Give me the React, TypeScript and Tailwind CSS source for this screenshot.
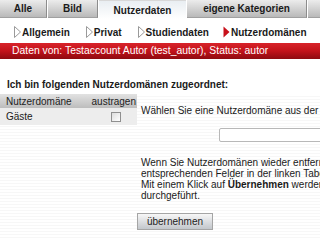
import React from 'react';

const tabs = [
  { label: 'Alle', w: 'w-[47px]' },
  { label: 'Bild', w: 'w-[50px]' },
  { label: 'Nutzerdaten', w: 'w-[87px]', active: true },
  { label: 'eigene Kategorien', w: 'w-[120px]' },
];

const subnav = [
  { label: 'Allgemein', ml: 'ml-[14px]' },
  { label: 'Privat', ml: 'ml-[16px]' },
  { label: 'Studiendaten', ml: 'ml-[16px]' },
  { label: 'Nutzerdomänen', ml: 'ml-[14px]', active: true },
];

function Arrow({ active }: { active?: boolean }) {
  return (
    <svg width="7" height="12" viewBox="0 0 7 12" className="flex-shrink-0">
      {active ? (
        <path d="M0.5 0.5 L6.5 6 L0.5 11.5 Z" fill="#c8101a" />
      ) : (
        <path d="M0.5 0.5 L6.5 6 L0.5 11.5 Z" fill="#fff" stroke="#9a9a9a" strokeWidth="1" />
      )}
    </svg>
  );
}

export default function App() {
  return (
    <div className="w-[320px] h-[240px] overflow-hidden bg-white text-[#1a1a1a] font-['Liberation_Sans',Arial,sans-serif]">
      {/* Tabs */}
      <div className="flex h-[18px] gap-px bg-white">
        {tabs.map((t) =>
          t.active ? (
            <div
              key={t.label}
              className={`${t.w} flex-shrink-0 h-[19px] flex items-center justify-center text-[10px] font-bold bg-linear-to-b from-[#e9eef2] to-white border-t border-[#d8d8d8]`}
            >
              {t.label}
            </div>
          ) : (
            <div
              key={t.label}
              className={`${t.w} flex-shrink-0 flex items-center justify-center text-[10px] font-bold bg-linear-to-b from-[#ececec] to-[#b9b9b9] border-r border-[#8c8c8c] border-b border-b-[#a0a0a0]`}
            >
              {t.label}
            </div>
          )
        )}
        <div className="flex-1 bg-linear-to-b from-[#ececec] to-[#b9b9b9] border-b border-[#a0a0a0]" />
      </div>

      {/* Sub navigation */}
      <div className="flex items-center h-[25px] pt-[3px]">
        {subnav.map((s) => (
          <div key={s.label} className={`${s.ml} flex items-center gap-px text-[10px] font-bold`}>
            <Arrow active={s.active} />
            <span>{s.label}</span>
          </div>
        ))}
      </div>

      {/* Red info bar */}
      <div className="h-[16px] flex items-center pl-[12px] text-[10.4px] text-white bg-linear-to-b from-[#d8232a] via-[#c2121a] to-[#8e0a10] whitespace-nowrap">
        Daten von: Testaccount Autor (test_autor), Status: autor
      </div>

      {/* Heading */}
      <div className="mt-[20px] pl-[7px] h-[12px] leading-[12px] text-[10px] font-bold whitespace-nowrap">
        Ich bin folgenden Nutzerdomänen zugeordnet:
      </div>

      {/* Content */}
      <div className="flex mt-[3px] h-[150px] bg-[repeating-linear-gradient(to_bottom,#ffffff_0px,#ffffff_2px,#f7f7f7_2px,#f7f7f7_3px)]">
        {/* Left table */}
        <div className="w-[137px] flex-shrink-0">
          <div className="h-[14px] flex items-center justify-between pl-[6px] pr-[1px] text-[10px] text-[#222] bg-linear-to-b from-[#e2e2e2] to-[#bdbdbd]">
            <span>Nutzerdomäne</span>
            <span>austragen</span>
          </div>
          <div className="h-[17px] flex items-center justify-between pl-[6px] pr-[16px] text-[10px] bg-[#ededed]">
            <span>Gäste</span>
            <span className="w-[10px] h-[10px] border border-[#8f8f8f] bg-linear-to-br from-[#dcdcdc] to-white" />
          </div>
        </div>

        {/* Right panel */}
        <div className="flex-1 min-w-0 pl-[4px] pt-[11px] text-[10px] whitespace-nowrap overflow-hidden">
          <div className="leading-[12px]">Wählen Sie eine Nutzerdomäne aus der folgenden Liste aus</div>
          <div className="mt-[11px] ml-[78px] h-[14px] w-[120px] border border-[#b8b8b8] rounded-[2px] bg-white" />
          <div className="mt-[15px] leading-[11px]">
            <div>Wenn Sie Nutzerdomänen wieder entfernen möchten, markieren Sie die</div>
            <div>entsprechenden Felder in der linken Tabelle.</div>
            <div>
              Mit einem Klick auf <b>Übernehmen</b> werden die Änderungen
            </div>
            <div>durchgeführt.</div>
          </div>
          <button className="mt-[12px] -ml-[4px] w-[76px] h-[17px] flex items-center justify-center text-[10px] text-[#222] border border-[#a5a5a5] bg-linear-to-b from-[#f7f7f7] to-[#c3c7cc]">
            übernehmen
          </button>
        </div>
      </div>
    </div>
  );
}
